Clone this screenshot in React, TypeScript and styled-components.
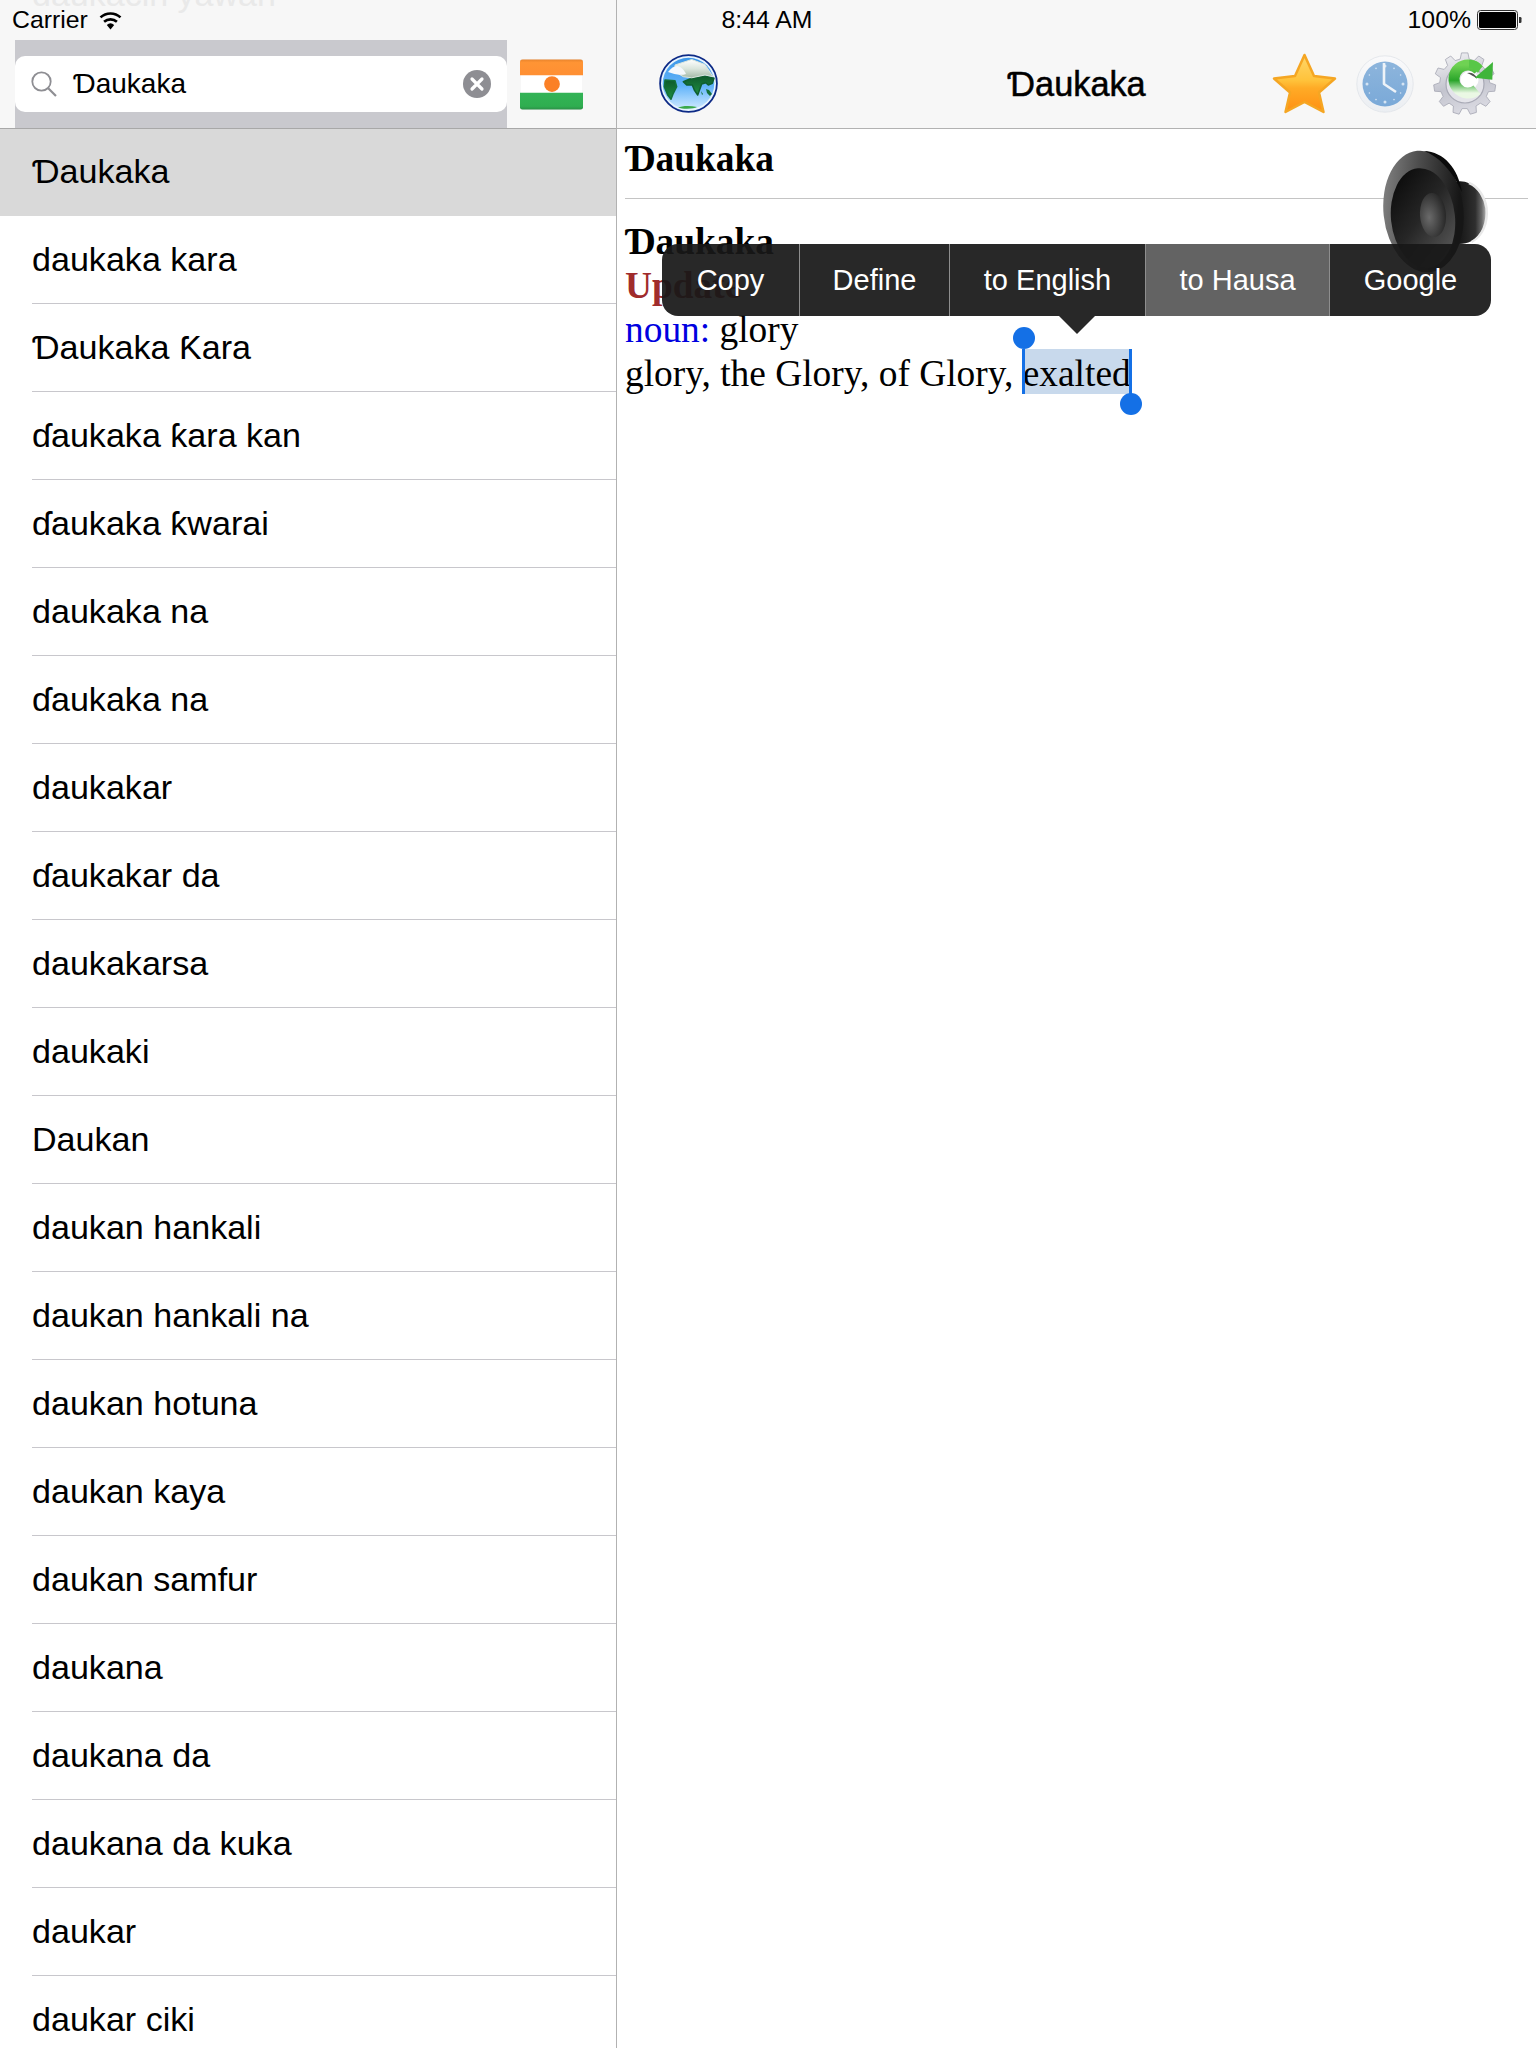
import React from "react";
import styled, { createGlobalStyle } from "styled-components";

const Global = createGlobalStyle`
  html, body { margin: 0; padding: 0; background: #fff; overflow: hidden; }
  body { font-family: "Liberation Sans", Arial, sans-serif; color: #000; }
`;

const Page = styled.div`
  position: relative;
  width: 1536px;
  height: 2048px;
  overflow: hidden;
  display: flex;
`;

const StatusBar = styled.div`
  position: absolute;
  z-index: 5;
  top: 0;
  left: 0;
  width: 1536px;
  height: 40px;
  padding: 0 14px 0 12px;
  box-sizing: border-box;
  display: grid;
  grid-template-columns: 1fr auto 1fr;
  align-items: center;
  font-size: 24.8px;
`;

const StatusLeft = styled.div`
  display: flex;
  align-items: center;
  gap: 10px;
`;

const StatusRight = styled.div`
  display: flex;
  align-items: center;
  justify-content: flex-end;
  gap: 6px;
`;

const Sidebar = styled.aside`
  width: 616px;
  flex: none;
  border-right: 1px solid #b2b2b2;
  height: 2048px;
  overflow: hidden;
`;

const SideHeader = styled.div`
  position: relative;
  height: 128px;
  border-bottom: 1px solid #a8a8a8;
  background: #f7f7f7;
  overflow: hidden;
  display: flex;
  align-items: flex-end;
  gap: 13px;
`;

const GhostRow = styled.div`
  position: absolute;
  left: 32px;
  top: -26px;
  font-size: 34px;
  line-height: 40px;
  color: #e9e9e9;
`;

const SearchWell = styled.div`
  margin-left: 15px;
  width: 492px;
  height: 88px;
  background: #c9c9ce;
  display: flex;
  align-items: center;
`;

const SearchField = styled.div`
  width: 100%;
  height: 56px;
  background: #fff;
  border-radius: 10px;
  display: flex;
  align-items: center;
  padding: 0 16px;
  box-sizing: border-box;
  font-size: 28px;
`;

const SearchText = styled.span`
  flex: 1;
  margin-left: 16px;
`;

const FlagSlot = styled.div`
  align-self: center;
  margin-top: 40px;
  display: flex;
`;

const List = styled.ul`
  list-style: none;
  margin: 0;
  padding: 0;
`;

const Row = styled.li<{ $selected?: boolean }>`
  height: ${(p) => (p.$selected ? 87 : 88)}px;
  box-sizing: border-box;
  padding-left: ${(p) => (p.$selected ? 0 : 32)}px;
  background: ${(p) => (p.$selected ? "#d9d9d9" : "#fff")};
`;

const RowLabel = styled.div<{ $selected?: boolean }>`
  height: 100%;
  box-sizing: border-box;
  display: flex;
  align-items: center;
  padding-left: ${(p) => (p.$selected ? 32 : 0)}px;
  padding-bottom: ${(p) => (p.$selected ? 3 : 0)}px;
  border-bottom: ${(p) => (p.$selected ? "none" : "1px solid #c8c7cc")};
  font-size: 34.1px;
`;

const Detail = styled.main`
  position: relative;
  flex: 1;
  min-width: 0;
`;

const NavBar = styled.header`
  height: 129px;
  box-sizing: border-box;
  padding-top: 40px;
  border-bottom: 1px solid #b2b2b2;
  background: #f7f7f7;
  display: grid;
  grid-template-columns: 1fr auto 1fr;
  align-items: center;
`;

const NavLeft = styled.div`
  display: flex;
  padding-left: 42px;
`;

const NavTitle = styled.div`
  font-size: 34.3px;
  font-weight: 400;
  -webkit-text-stroke: 0.5px #000;
`;

const NavRight = styled.div`
  display: flex;
  justify-content: flex-end;
  align-items: center;
  gap: 19px;
  padding-right: 39px;
`;

const Article = styled.article`
  padding: 8px 0 0 8px;
  margin-right: 8px;
  font-family: "Liberation Serif", "Times New Roman", serif;
  font-size: 37.4px;
  line-height: 44px;
`;

const Heading = styled.div`
  font-weight: 700;
`;

const Rule = styled.hr`
  margin: 17px 0 21px;
  border: 0;
  height: 1px;
  background: #c4c4c4;
`;

const UpdateLine = styled.div`
  color: #a02c2c;
  font-weight: 700;
`;

const Pos = styled.span`
  color: #0000e0;
`;

const Selection = styled.span`
  position: relative;
  display: inline-block;
  box-sizing: border-box;
  height: 45px;
  margin-top: -3px;
  padding-top: 3px;
  background: #c8d9ec;
  vertical-align: top;
`;

const Caret = styled.i<{ $side: "start" | "end" }>`
  position: absolute;
  top: 0;
  width: 3px;
  height: 45px;
  background: #1470e6;
  ${(p) => (p.$side === "start" ? "left: -1px;" : "right: -1px;")}
  &::after {
    content: "";
    position: absolute;
    left: -9px;
    width: 22px;
    height: 22px;
    border-radius: 50%;
    background: #1470e6;
    ${(p) => (p.$side === "start" ? "top: -22px;" : "bottom: -21px;")}
  }
`;

const Speaker = styled.div`
  position: absolute;
  z-index: 1;
  left: 763px;
  top: 146px;
  display: flex;
`;

const Menu = styled.div`
  position: absolute;
  z-index: 2;
  left: 45px;
  top: 244px;
  height: 72px;
  display: flex;
  border-radius: 16px;
  background: rgba(24, 24, 24, 0.93);
`;

const MenuItem = styled.div<{ $active?: boolean; $width: number }>`
  width: ${(p) => p.$width}px;
  display: flex;
  align-items: center;
  justify-content: center;
  color: #fff;
  font-size: 29px;
  background: ${(p) => (p.$active ? "#636363" : "transparent")};
  border-left: 1px solid #8e8e8e;
  box-sizing: border-box;
  &:first-child {
    border-left: 0;
    border-radius: 16px 0 0 16px;
  }
  &:last-child {
    border-radius: 0 16px 16px 0;
  }
`;

const MenuArrow = styled.div`
  position: absolute;
  left: 397px;
  top: 72px;
  width: 0;
  height: 0;
  border-left: 18px solid transparent;
  border-right: 18px solid transparent;
  border-top: 18px solid rgba(24, 24, 24, 0.93);
`;

const words: { text: string; selected?: boolean }[] = [
  { text: "Ɗaukaka", selected: true },
  { text: "daukaka kara" },
  { text: "Ɗaukaka Ƙara" },
  { text: "ɗaukaka ƙara kan" },
  { text: "ɗaukaka ƙwarai" },
  { text: "daukaka na" },
  { text: "ɗaukaka na" },
  { text: "daukakar" },
  { text: "ɗaukakar da" },
  { text: "daukakarsa" },
  { text: "daukaki" },
  { text: "Daukan" },
  { text: "daukan hankali" },
  { text: "daukan hankali na" },
  { text: "daukan hotuna" },
  { text: "daukan kaya" },
  { text: "daukan samfur" },
  { text: "daukana" },
  { text: "daukana da" },
  { text: "daukana da kuka" },
  { text: "daukar" },
  { text: "daukar ciki" },
];

const menuItems = [
  { label: "Copy", width: 137 },
  { label: "Define", width: 150 },
  { label: "to English", width: 196 },
  { label: "to Hausa", width: 184, active: true },
  { label: "Google", width: 162 },
];

const Wifi = () => (
  <svg width="25" height="20" viewBox="0 0 24 20">
    <path d="M12 19.5 8.3 15a5.6 5.6 0 0 1 7.4 0z" fill="#000" />
    <path d="M5.6 11.8a9.6 9.6 0 0 1 12.8 0" fill="none" stroke="#000" strokeWidth="2.6" />
    <path d="M2 7.4a14.8 14.8 0 0 1 20 0" fill="none" stroke="#000" strokeWidth="2.6" />
  </svg>
);

const Battery = () => (
  <svg width="45" height="20" viewBox="0 0 45 20">
    <rect x="0.5" y="0.5" width="40" height="19" rx="3" fill="none" stroke="#333" />
    <rect x="2" y="2" width="37" height="16" rx="1.5" fill="#000" />
    <path d="M42 7h1.2a1.3 1.3 0 0 1 1.3 1.3v3.4a1.3 1.3 0 0 1-1.3 1.3H42z" fill="#333" />
  </svg>
);

const SearchGlyph = () => (
  <svg width="26" height="26" viewBox="0 0 26 26" fill="none" stroke="#8e8e93" strokeWidth="1.8">
    <circle cx="10.5" cy="10.5" r="9.2" />
    <path d="M17.2 17.2 25 25" strokeWidth="2.2" />
  </svg>
);

const ClearGlyph = () => (
  <svg width="28" height="28" viewBox="0 0 28 28">
    <circle cx="14" cy="14" r="14" fill="#8e8e93" />
    <path d="M9 9l10 10M19 9 9 19" stroke="#fff" strokeWidth="3.2" strokeLinecap="round" />
  </svg>
);

const Flag = () => (
  <svg width="63" height="51" viewBox="0 0 64 51">
    <defs>
      <linearGradient id="fo" x1="0" y1="0" x2="0" y2="1">
        <stop offset="0" stopColor="#e9842c" />
        <stop offset="0.2" stopColor="#ff9434" />
        <stop offset="1" stopColor="#ff8f33" />
      </linearGradient>
      <linearGradient id="fg" x1="0" y1="0" x2="0" y2="1">
        <stop offset="0" stopColor="#33b356" />
        <stop offset="0.8" stopColor="#2fae50" />
        <stop offset="1" stopColor="#2c8f47" />
      </linearGradient>
    </defs>
    <rect x="0" y="0" width="64" height="51" rx="2.5" fill="#fff" stroke="#ddd" strokeWidth="0.5" />
    <path d="M0 16V2.5A2.5 2.5 0 0 1 2.5 0h59A2.5 2.5 0 0 1 64 2.5V16z" fill="url(#fo)" />
    <path d="M0 34h64v14.5a2.5 2.5 0 0 1-2.5 2.5h-59A2.5 2.5 0 0 1 0 48.5z" fill="url(#fg)" />
    <circle cx="32.500" cy="25" r="8" fill="#fb8026" />
  </svg>
);

const Globe = () => (
  <svg width="60" height="60" viewBox="0 0 60 60">
    <defs>
      <linearGradient id="sea" x1="0" y1="0" x2="0" y2="1">
        <stop offset="0" stopColor="#3d97e8" />
        <stop offset="0.55" stopColor="#62b4fa" />
        <stop offset="1" stopColor="#d0eaff" />
      </linearGradient>
      <linearGradient id="land" x1="0" y1="0" x2="0" y2="1">
        <stop offset="0" stopColor="#0e5a2c" />
        <stop offset="1" stopColor="#1f8f42" />
      </linearGradient>
      <linearGradient id="shine" x1="0" y1="0" x2="0" y2="1">
        <stop offset="0" stopColor="#ffffff" />
        <stop offset="0.5" stopColor="#dbe6dd" />
        <stop offset="1" stopColor="#a3b9a8" />
      </linearGradient>
    </defs>
    <circle cx="29.500" cy="29.500" r="28.400" fill="#e8f5ff" stroke="#0d2a86" strokeWidth="1.800" />
    <circle cx="29.500" cy="29.500" r="25.800" fill="url(#sea)" />
    <path
      d="M6 26 16 26.700 17.700 32.700 14.300 39.300 12 45.300 8.700 41 5.300 32.700z"
      fill="url(#land)"
      stroke="#14703a"
      strokeWidth="1.500"
      strokeLinejoin="round"
    />
    <path
      d="M24.300 27.700 32.700 24.300 46 22 55 24.300 53.300 29.300 49.300 31 46.700 28.700 42.700 30 38.700 41 35.300 36 33.300 31 27.700 31z"
      fill="url(#land)"
      stroke="#0f5f30"
      strokeWidth="1.500"
      strokeLinejoin="round"
    />
    <path d="M47 35l3 1 3 4-2 2-3-3zM42 37l2 3-1 1z" fill="#14703a" />
    <path d="M19 53.500c4-1.800 12-2.300 19-.4-3 1.800-14 2.300-19 .4z" fill="#3aa94a" />
    <path
      d="M16 11 32.700 5.500 46 10.500 54 22.700 46 21 32.700 23.800 24.300 22.700 16 17.700z"
      fill="url(#shine)"
      stroke="#dbe6dd"
      strokeWidth="1"
      strokeLinejoin="round"
    />
    <path d="M9 18c3-4 6-6 9-6 5 1 7 4 9 8-6 2-12 0-18-2z" fill="#f4f8fc" />
  </svg>
);

const Star = () => (
  <svg width="68" height="62" viewBox="-1 0 68 62">
    <defs>
      <linearGradient id="starFill" x1="0" y1="0" x2="0" y2="1">
        <stop offset="0" stopColor="#ffd76a" />
        <stop offset="0.45" stopColor="#ffc23a" />
        <stop offset="0.58" stopColor="#ffab26" />
        <stop offset="1" stopColor="#ff8f12" />
      </linearGradient>
    </defs>
    <path
      d="M34.500 2 44 23 65 25.500 49 39.500 53.500 59 34.500 49 15.500 59 20 39.500 4 25.500 25 23z"
      fill="url(#starFill)"
      stroke="#f5a623"
      strokeWidth="2.500"
      strokeLinejoin="round"
    />
  </svg>
);

const Clock = () => {
  const dots = Array.from({ length: 12 }, (_, i) => {
    const a = (i * Math.PI) / 6;
    return { x: 29 + 18 * Math.sin(a), y: 29 - 18 * Math.cos(a), r: i % 3 === 0 ? 1.5 : 0.8 };
  });
  return (
    <svg width="58" height="58" viewBox="0 0 58 58">
      <defs>
        <linearGradient id="rim" x1="0" y1="0" x2="0" y2="1">
          <stop offset="0" stopColor="#fafafb" />
          <stop offset="1" stopColor="#ebeef2" />
        </linearGradient>
        <linearGradient id="face" x1="0" y1="0" x2="0" y2="1">
          <stop offset="0" stopColor="#8db5dc" />
          <stop offset="1" stopColor="#7aa9d8" />
        </linearGradient>
      </defs>
      <circle cx="29" cy="29" r="28.200" fill="url(#rim)" stroke="#e0e3e8" strokeWidth="0.8" />
      <circle cx="29" cy="29" r="22.500" fill="url(#face)" />
      {dots.map((d, i) => (
        <circle key={i} cx={d.x} cy={d.y} r={d.r} fill="#d5e4f3" />
      ))}
      <path d="M28 8v21l12 8" fill="none" stroke="#eef3f8" strokeWidth="2.600" strokeLinejoin="round" />
    </svg>
  );
};

const gearPath = (() => {
  const teeth = 11;
  const outer = 31;
  const inner = 25;
  const c = 31.7;
  const pts: string[] = [];
  for (let i = 0; i < teeth; i++) {
    const a = (i / teeth) * Math.PI * 2;
    const step = (Math.PI * 2) / teeth;
    [
      [inner, a - step * 0.32],
      [outer, a - step * 0.18],
      [outer, a + step * 0.18],
      [inner, a + step * 0.32],
    ].forEach(([r, t]) => {
      pts.push(`${(c + r * Math.sin(t)).toFixed(1)} ${(c - r * Math.cos(t)).toFixed(1)}`);
    });
  }
  return `M${pts.join("L")}z`;
})();

const GearSync = () => (
  <svg width="64" height="64" viewBox="0 0 64 64">
    <defs>
      <linearGradient id="metal" x1="0" y1="0" x2="0.3" y2="1">
        <stop offset="0" stopColor="#f6f6f8" />
        <stop offset="0.6" stopColor="#c3c4ce" />
        <stop offset="1" stopColor="#d8d8e0" />
      </linearGradient>
      <linearGradient id="sync" x1="0" y1="0" x2="0" y2="1">
        <stop offset="0" stopColor="#6fd253" />
        <stop offset="0.55" stopColor="#2aa52a" />
        <stop offset="1" stopColor="#eaf8e4" />
      </linearGradient>
    </defs>
    <path d={gearPath} fill="url(#metal)" stroke="#a5a6b2" strokeWidth="0.8" />
    <circle cx="32" cy="32" r="19" fill="#e4e4ea" stroke="#a9aab6" strokeWidth="1.200" />
    <circle cx="36.500" cy="28" r="9" fill="#ffffff" />
    <path d="M34 21a8 8 0 0 1 10 6c-3-3-6-4-10-6z" fill="#4f534f" />
    <path d="M45.700 18A14 14 0 1 0 44 37.700" fill="none" stroke="url(#sync)" strokeWidth="11" />
    <path d="M60 10 59.300 27.700 41.700 25.700z" fill="#3fb53a" />
    <path d="M36 8c6 0 10 2 13 6l-4 7c-2-3-5-5-9-5z" fill="#58c747" />
  </svg>
);

const SpeakerGlyph = () => (
  <svg width="114" height="130" viewBox="0 0 114 130">
    <defs>
      <linearGradient id="mag" x1="0" y1="0" x2="1" y2="0">
        <stop offset="0" stopColor="#111" />
        <stop offset="0.65" stopColor="#2e2e2e" />
        <stop offset="0.85" stopColor="#666" />
        <stop offset="1" stopColor="#b4b4b4" />
      </linearGradient>
      <linearGradient id="cone" x1="0" y1="0" x2="1" y2="0.3">
        <stop offset="0" stopColor="#8c8c8c" />
        <stop offset="0.5" stopColor="#4c4c4c" />
        <stop offset="1" stopColor="#161616" />
      </linearGradient>
      <linearGradient id="well" x1="0" y1="0" x2="0.7" y2="1">
        <stop offset="0" stopColor="#050505" />
        <stop offset="0.55" stopColor="#262626" />
        <stop offset="1" stopColor="#555" />
      </linearGradient>
      <radialGradient id="cap" cx="0.35" cy="0.55" r="0.7">
        <stop offset="0" stopColor="#6a6a6a" />
        <stop offset="1" stopColor="#222" />
      </radialGradient>
    </defs>
    <path d="M75 36C90 32 103 46 106 62c2 20-9 36-27 36z" fill="url(#mag)" />
    <path d="M89 37c10 4 16 15 17.500 25 1.500 15-4 28-15 34" fill="none" stroke="#e8e8e8" strokeWidth="2.500" />
    <ellipse cx="43.500" cy="65.500" rx="40" ry="61" transform="rotate(-6 43.500 65.500)" fill="url(#cone)" />
    <path d="M44 5C64 6 78 22 82 46 72 24 58 10 44 5z" fill="#0a0a0a" />
    <ellipse cx="43" cy="72" rx="32" ry="50" transform="rotate(-6 43 72)" fill="url(#well)" />
    <ellipse cx="53" cy="69" rx="13" ry="22" transform="rotate(-4 53 69)" fill="url(#cap)" />
  </svg>
);

export default function App() {
  return (
    <Page>
      <Global />
      <StatusBar>
        <StatusLeft>
          <span>Carrier</span>
          <Wifi />
        </StatusLeft>
        <span>8:44 AM</span>
        <StatusRight>
          <span>100%</span>
          <Battery />
        </StatusRight>
      </StatusBar>
      <Sidebar>
        <SideHeader>
          <GhostRow>daukacin yawan</GhostRow>
          <SearchWell>
            <SearchField>
              <SearchGlyph />
              <SearchText>Ɗaukaka</SearchText>
              <ClearGlyph />
            </SearchField>
          </SearchWell>
          <FlagSlot>
            <Flag />
          </FlagSlot>
        </SideHeader>
        <List>
          {words.map((w, i) => (
            <Row key={i} $selected={w.selected}>
              <RowLabel $selected={w.selected}>{w.text}</RowLabel>
            </Row>
          ))}
        </List>
      </Sidebar>
      <Detail>
        <NavBar>
          <NavLeft>
            <Globe />
          </NavLeft>
          <NavTitle>Ɗaukaka</NavTitle>
          <NavRight>
            <Star />
            <Clock />
            <GearSync />
          </NavRight>
        </NavBar>
        <Article>
          <Heading>Ɗaukaka</Heading>
          <Rule />
          <Heading>Ɗaukaka</Heading>
          <UpdateLine>Update</UpdateLine>
          <div>
            <Pos>noun:</Pos> glory
          </div>
          <div>
            glory, the Glory, of Glory,{" "}
            <Selection>
              exalted
              <Caret $side="start" />
              <Caret $side="end" />
            </Selection>
          </div>
        </Article>
        <Speaker>
          <SpeakerGlyph />
        </Speaker>
        <Menu>
          {menuItems.map((m) => (
            <MenuItem key={m.label} $width={m.width} $active={m.active}>
              {m.label}
            </MenuItem>
          ))}
          <MenuArrow />
        </Menu>
      </Detail>
    </Page>
  );
}
